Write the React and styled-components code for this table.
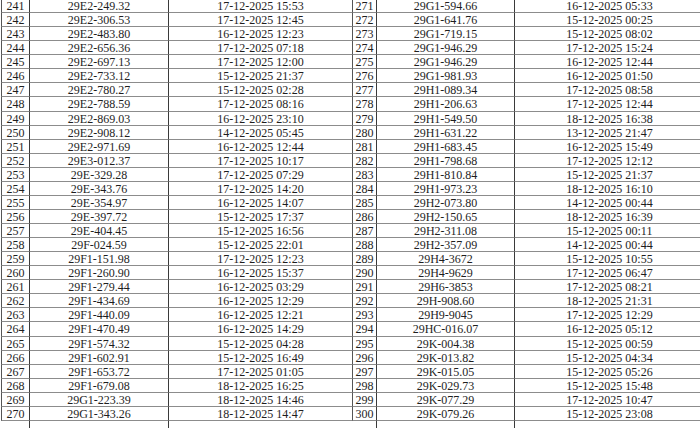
import React from "react";
import styled, { createGlobalStyle } from "styled-components";

const Global = createGlobalStyle`
  html, body { margin: 0; padding: 0; background: #fff; }
  body { width: 700px; height: 428px; overflow: hidden; }
`;

const left = [
  ["241", "29E2-249.32", "17-12-2025 15:53"],
  ["242", "29E2-306.53", "17-12-2025 12:45"],
  ["243", "29E2-483.80", "16-12-2025 12:23"],
  ["244", "29E2-656.36", "17-12-2025 07:18"],
  ["245", "29E2-697.13", "17-12-2025 12:00"],
  ["246", "29E2-733.12", "15-12-2025 21:37"],
  ["247", "29E2-780.27", "15-12-2025 02:28"],
  ["248", "29E2-788.59", "17-12-2025 08:16"],
  ["249", "29E2-869.03", "16-12-2025 23:10"],
  ["250", "29E2-908.12", "14-12-2025 05:45"],
  ["251", "29E2-971.69", "16-12-2025 12:44"],
  ["252", "29E3-012.37", "17-12-2025 10:17"],
  ["253", "29E-329.28", "17-12-2025 07:29"],
  ["254", "29E-343.76", "17-12-2025 14:20"],
  ["255", "29E-354.97", "16-12-2025 14:07"],
  ["256", "29E-397.72", "15-12-2025 17:37"],
  ["257", "29E-404.45", "15-12-2025 16:56"],
  ["258", "29F-024.59", "15-12-2025 22:01"],
  ["259", "29F1-151.98", "17-12-2025 12:23"],
  ["260", "29F1-260.90", "16-12-2025 15:37"],
  ["261", "29F1-279.44", "16-12-2025 03:29"],
  ["262", "29F1-434.69", "16-12-2025 12:29"],
  ["263", "29F1-440.09", "16-12-2025 12:21"],
  ["264", "29F1-470.49", "16-12-2025 14:29"],
  ["265", "29F1-574.32", "15-12-2025 04:28"],
  ["266", "29F1-602.91", "15-12-2025 16:49"],
  ["267", "29F1-653.72", "17-12-2025 01:05"],
  ["268", "29F1-679.08", "18-12-2025 16:25"],
  ["269", "29G1-223.39", "18-12-2025 14:46"],
  ["270", "29G1-343.26", "18-12-2025 14:47"],
];

const right = [
  ["271", "29G1-594.66", "16-12-2025 05:33"],
  ["272", "29G1-641.76", "15-12-2025 00:25"],
  ["273", "29G1-719.15", "15-12-2025 08:02"],
  ["274", "29G1-946.29", "17-12-2025 15:24"],
  ["275", "29G1-946.29", "16-12-2025 12:44"],
  ["276", "29G1-981.93", "16-12-2025 01:50"],
  ["277", "29H1-089.34", "17-12-2025 08:58"],
  ["278", "29H1-206.63", "17-12-2025 12:44"],
  ["279", "29H1-549.50", "18-12-2025 16:38"],
  ["280", "29H1-631.22", "13-12-2025 21:47"],
  ["281", "29H1-683.45", "16-12-2025 15:49"],
  ["282", "29H1-798.68", "17-12-2025 12:12"],
  ["283", "29H1-810.84", "15-12-2025 21:37"],
  ["284", "29H1-973.23", "18-12-2025 16:10"],
  ["285", "29H2-073.80", "14-12-2025 00:44"],
  ["286", "29H2-150.65", "18-12-2025 16:39"],
  ["287", "29H2-311.08", "15-12-2025 00:11"],
  ["288", "29H2-357.09", "14-12-2025 00:44"],
  ["289", "29H4-3672", "15-12-2025 10:55"],
  ["290", "29H4-9629", "17-12-2025 06:47"],
  ["291", "29H6-3853", "17-12-2025 08:21"],
  ["292", "29H-908.60", "18-12-2025 21:31"],
  ["293", "29H9-9045", "17-12-2025 12:29"],
  ["294", "29HC-016.07", "16-12-2025 05:12"],
  ["295", "29K-004.38", "15-12-2025 00:59"],
  ["296", "29K-013.82", "15-12-2025 04:34"],
  ["297", "29K-015.05", "15-12-2025 05:26"],
  ["298", "29K-029.73", "15-12-2025 15:48"],
  ["299", "29K-077.29", "17-12-2025 10:47"],
  ["300", "29K-079.26", "15-12-2025 23:08"],
];

const Page = styled.div`
  display: flex;
  align-items: flex-start;
  padding-left: 1px;
  margin-top: -1px;
  font-family: "Liberation Serif", "Times New Roman", serif;
  font-size: 12px;
  color: #1e1e1e;
`;

const Table = styled.div`
  display: grid;
  grid-template-columns: ${(p) => p.$cols};
  grid-auto-rows: 14.07px;
`;

const Cell = styled.div`
  box-sizing: border-box;
  display: flex;
  align-items: center;
  justify-content: center;
  white-space: nowrap;
  line-height: 1;
  border-bottom: 1px solid #8c8c8c;
  border-left: 1px solid ${(p) => (p.$first ? "#555" : "#3a3a3a")};
  padding-top: 1px;
`;

const Stub = styled.div`
  box-sizing: border-box;
  border-left: ${(p) => (p.$line ? "1px solid #3a3a3a" : "none")};
  height: 7px;
`;

function Block({ rows, cols }) {
  return (
    <Table $cols={cols}>
      {rows.map((r) => (
        <React.Fragment key={r[0]}>
          <Cell $first>{r[0]}</Cell>
          <Cell>{r[1]}</Cell>
          <Cell>{r[2]}</Cell>
        </React.Fragment>
      ))}
      <Stub />
      <Stub $line />
      <Stub $line />
    </Table>
  );
}

export default function App() {
  return (
    <>
      <Global />
      <Page>
        <Block rows={left} cols="28px 139px 184px" />
        <Block rows={right} cols="24px 138px 190px" />
      </Page>
    </>
  );
}
